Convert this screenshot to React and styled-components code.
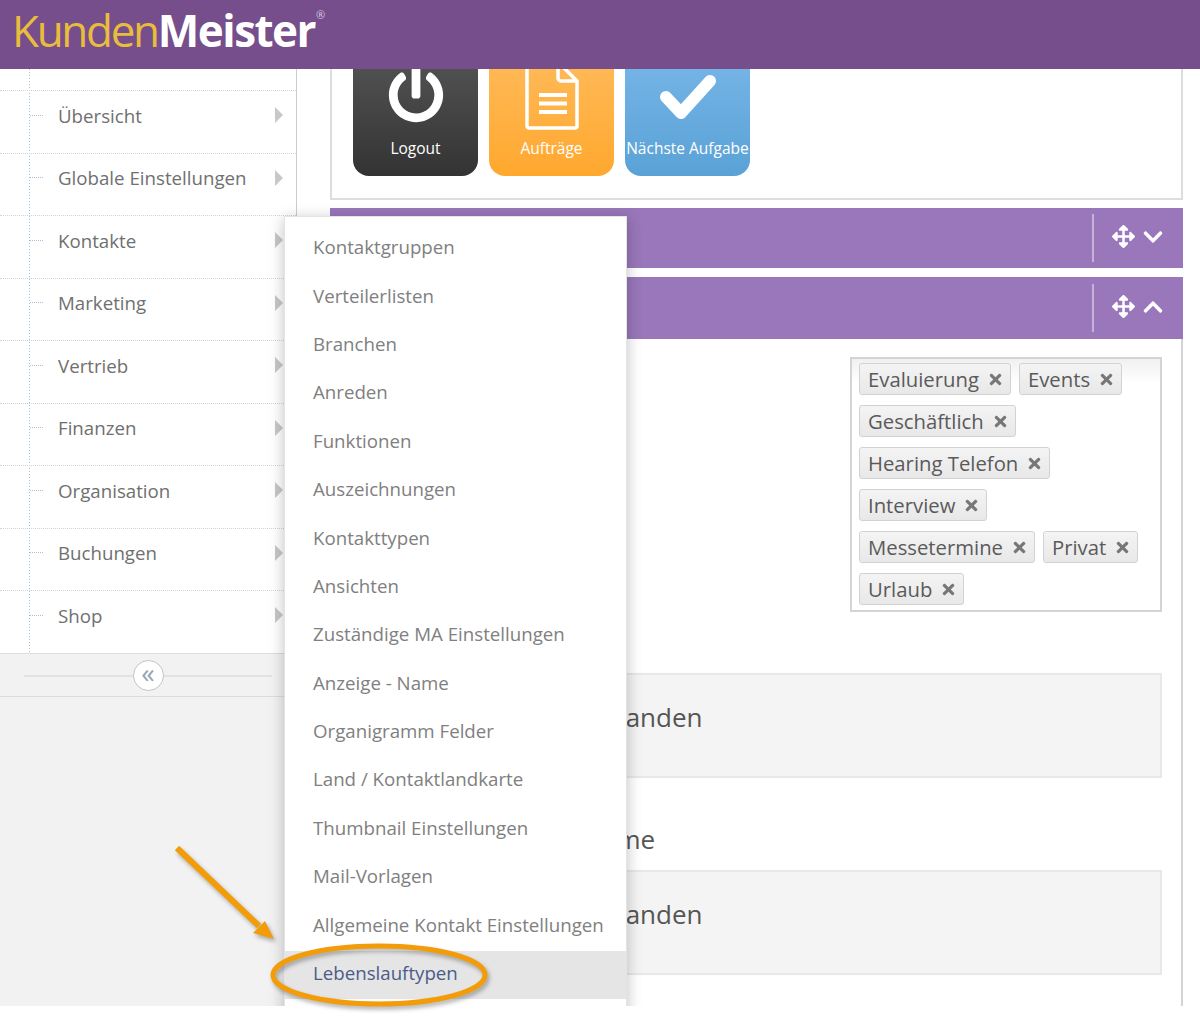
import React from "react";
import styled, { createGlobalStyle } from "styled-components";
import {
  FaArrowsAlt,
  FaChevronDown,
  FaChevronUp,
  FaPowerOff,
  FaTimes,
} from "react-icons/fa";

const navItems = [
  "Übersicht",
  "Globale Einstellungen",
  "Kontakte",
  "Marketing",
  "Vertrieb",
  "Finanzen",
  "Organisation",
  "Buchungen",
  "Shop",
];

const menuItems = [
  "Kontaktgruppen",
  "Verteilerlisten",
  "Branchen",
  "Anreden",
  "Funktionen",
  "Auszeichnungen",
  "Kontakttypen",
  "Ansichten",
  "Zuständige MA Einstellungen",
  "Anzeige - Name",
  "Organigramm Felder",
  "Land / Kontaktlandkarte",
  "Thumbnail Einstellungen",
  "Mail-Vorlagen",
  "Allgemeine Kontakt Einstellungen",
  "Lebenslauftypen",
];

const tagRows = [
  ["Evaluierung", "Events"],
  ["Geschäftlich"],
  ["Hearing Telefon"],
  ["Interview"],
  ["Messetermine", "Privat"],
  ["Urlaub"],
];

const FileGlyph = () => (
  <TileSvg $top={8} width="54" height="74" viewBox="0 0 54 74" fill="none" stroke="#fff">
    <path d="M2 5 H33 L52 24 V69 a2 2 0 0 1 -2 2 H4 a2 2 0 0 1 -2 -2 Z" strokeWidth="3.5" />
    <path d="M33 5 V21 a3 3 0 0 0 3 3 H52" strokeWidth="3.5" />
    <path d="M14 38 H42 M14 46.5 H42 M14 55 H42" strokeWidth="4" />
  </TileSvg>
);

const CheckGlyph = () => (
  <TileSvg $top={25} width="58" height="46" viewBox="0 0 58 46" fill="none" stroke="#fff">
    <path
      d="M7 23 L22 39 L51 7"
      strokeWidth="12"
      strokeLinecap="round"
      strokeLinejoin="round"
    />
  </TileSvg>
);

export default function App() {
  return (
    <Page>
      <GlobalStyle />
      <Frame>
        <Header>
          <Logo>
            <LogoLight>Kunden</LogoLight>
            <LogoBold>Meister</LogoBold>
            <LogoMark>®</LogoMark>
          </Logo>
        </Header>
        <Body>
          <Sidebar>
            <Nav>
              {navItems.map((item) => (
                <NavItem key={item}>
                  <NavTick />
                  <NavLabel>{item}</NavLabel>
                  <NavArrow />
                </NavItem>
              ))}
            </Nav>
            <Collapse>
              <CollapseLine />
              <CollapseButton>«</CollapseButton>
            </Collapse>
          </Sidebar>
          <Main>
            <Shortcuts>
              <Tile $from="#555555" $to="#333333">
                <PowerIcon />
                <TileLabel>Logout</TileLabel>
              </Tile>
              <Tile $from="#ffbb5c" $to="#ffa82e">
                <FileGlyph />
                <TileLabel>Aufträge</TileLabel>
              </Tile>
              <Tile $from="#78b6e8" $to="#5aa2d6">
                <CheckGlyph />
                <TileLabel>Nächste Aufgabe</TileLabel>
              </Tile>
            </Shortcuts>
            <PanelBar>
              <PanelTools>
                <FaArrowsAlt size={23} />
                <FaChevronDown size={22} />
              </PanelTools>
            </PanelBar>
            <PanelBar $open>
              <PanelTools>
                <FaArrowsAlt size={23} />
                <FaChevronUp size={22} />
              </PanelTools>
            </PanelBar>
            <PanelBody>
              <TagBox>
                {tagRows.map((row) => (
                  <TagRow key={row[0]}>
                    {row.map((tag) => (
                      <Tag key={tag}>
                        {tag}
                        <FaTimes size={17} />
                      </Tag>
                    ))}
                  </TagRow>
                ))}
              </TagBox>
              <Well $gap={61}>Keine Lebensläufe vorhanden</Well>
              <FieldLabel>Lebenslauf Name</FieldLabel>
              <Well $gap={14}>Keine Lebensläufe vorhanden</Well>
            </PanelBody>
          </Main>
        </Body>
        <Menu>
          {menuItems.map((item) => (
            <MenuItem key={item} $active={item === "Lebenslauftypen"}>
              {item}
            </MenuItem>
          ))}
        </Menu>
      </Frame>
      <Annotation viewBox="0 0 330 190" fill="none">
        <path d="M10 12 L92 90" stroke="#f39c0a" strokeWidth="6" />
        <path d="M107 103 L86 97 L98 85 Z" fill="#f39c0a" />
        <ellipse
          cx="212"
          cy="139"
          rx="106"
          ry="29"
          stroke="#f39c0a"
          strokeWidth="5"
        />
      </Annotation>
    </Page>
  );
}

const GlobalStyle = createGlobalStyle`
  * {
    box-sizing: border-box;
  }

  body {
    margin: 0;
    background: #ffffff;
    font-family: "Open Sans", "Liberation Sans", sans-serif;
  }
`;

const Page = styled.div`
  position: relative;
  width: 1200px;
  height: 1019px;
  overflow: hidden;
`;

const Frame = styled.div`
  position: relative;
  height: 1006px;
  overflow: hidden;
  display: flex;
  flex-direction: column;
`;

const Header = styled.header`
  position: relative;
  z-index: 2;
  flex: none;
  height: 69px;
  background: #754e8b;
  padding: 0 0 9px 12px;
  display: flex;
  align-items: center;
`;

const Logo = styled.div`
  display: flex;
  align-items: flex-start;
  font-size: 44px;
  line-height: 60px;
`;

const LogoLight = styled.span`
  color: #e8bc3d;
  font-weight: 400;
  letter-spacing: -2.3px;
`;

const LogoBold = styled.span`
  color: #ffffff;
  font-weight: 700;
  letter-spacing: -1.5px;
`;

const LogoMark = styled.span`
  color: #d8cde0;
  font-size: 11px;
  line-height: 18px;
  margin: 6px 0 0 1px;
`;

const Body = styled.div`
  flex: 1;
  min-height: 0;
  display: flex;
`;

const Sidebar = styled.aside`
  flex: none;
  width: 297px;
  background: #f2f2f2;
  border-right: 1px solid #cccccc;
`;

const Nav = styled.ul`
  list-style: none;
  margin: 0;
  padding: 21px 0 0;
  height: 584px;
  background: #ffffff;
  background-image: linear-gradient(#9cc4e8 50%, transparent 50%);
  background-size: 1px 3px;
  background-repeat: repeat-y;
  background-position: 29px 0;
`;

const NavItem = styled.li`
  height: 62.5px;
  display: flex;
  align-items: center;
  padding: 0 0 13px 30px;
  border-top: 1px dotted #d4d4d4;
`;

const NavTick = styled.span`
  flex: none;
  width: 13px;
  border-top: 1px dotted #a9c0d8;
`;

const NavLabel = styled.span`
  flex: 1;
  margin-left: 15px;
  font-size: 18.7px;
  color: #707070;
`;

const NavArrow = styled.span`
  flex: none;
  margin-right: 13px;
  border-left: 8px solid #c8c8c8;
  border-top: 8px solid transparent;
  border-bottom: 8px solid transparent;
`;

const Collapse = styled.div`
  position: relative;
  height: 44px;
  border-top: 1px solid #dddddd;
  border-bottom: 1px solid #dddddd;
  display: flex;
  align-items: center;
  justify-content: center;
`;

const CollapseLine = styled.span`
  position: absolute;
  left: 24px;
  right: 24px;
  top: 50%;
  border-top: 2px solid #e2e2e2;
`;

const CollapseButton = styled.span`
  position: relative;
  width: 31px;
  height: 31px;
  border-radius: 50%;
  border: 1px solid #c4c4c4;
  background: #ffffff;
  color: #98a4b4;
  font-size: 27px;
  line-height: 24px;
  display: flex;
  align-items: center;
  justify-content: center;
  padding-bottom: 5px;
`;

const Main = styled.main`
  flex: 1;
  min-width: 0;
  margin-top: -20px;
  padding: 0 17px 0 33px;
  display: flex;
  flex-direction: column;
`;

const Shortcuts = styled.section`
  flex: none;
  height: 151px;
  border: 2px solid #dddddd;
  border-top: none;
  padding-left: 21px;
  display: flex;
  gap: 11px;
`;

const Tile = styled.div`
  width: 125px;
  height: 127px;
  border-radius: 0 0 16px 16px;
  background: linear-gradient(${(p) => p.$from}, ${(p) => p.$to});
  color: #ffffff;
  display: flex;
  flex-direction: column;
  align-items: center;
  position: relative;
  white-space: nowrap;
`;

const PowerIcon = styled(FaPowerOff)`
  width: 56px;
  height: 60px;
  margin-top: 16px;
`;

const TileSvg = styled.svg`
  margin-top: ${(p) => p.$top}px;
`;

const TileLabel = styled.span`
  position: absolute;
  top: 88px;
  left: 0;
  right: 0;
  text-align: center;
  font-size: 15.5px;
  line-height: 22px;
`;

const PanelBar = styled.div`
  flex: none;
  height: ${(p) => (p.$open ? "62px" : "60px")};
  margin-top: ${(p) => (p.$open ? "9px" : "8px")};
  background: #9977ba;
  display: flex;
  justify-content: flex-end;
  align-items: center;
`;

const PanelTools = styled.div`
  width: 91px;
  height: 48px;
  border-left: 2px solid #c4b2d8;
  color: #ffffff;
  display: flex;
  align-items: center;
  gap: 7px;
  padding: 0 0 3px 18px;
`;

const PanelBody = styled.section`
  flex: 1;
  border-right: 2px solid #d4d4d4;
  padding: 18px 19px 0 20px;
  display: flex;
  flex-direction: column;
`;

const TagBox = styled.div`
  align-self: flex-end;
  width: 312px;
  height: 255px;
  border: 2px solid #d4d4d4;
  background: linear-gradient(#f0f0f0, #ffffff 24px);
  padding: 4px 7px;
  display: flex;
  flex-direction: column;
  gap: 10px;
`;

const TagRow = styled.div`
  display: flex;
  gap: 8px;
`;

const Tag = styled.span`
  height: 32px;
  padding: 0 6px 0 8px;
  display: flex;
  align-items: center;
  gap: 8px;
  border: 1px solid #d2d2d2;
  border-radius: 3px;
  background: linear-gradient(#f4f4f4, #e8e8e8);
  color: #5a5a5a;
  font-size: 20.3px;
  white-space: nowrap;

  svg {
    color: #777777;
  }
`;

const Well = styled.div`
  height: 105px;
  margin-top: ${(p) => p.$gap}px;
  border: 2px solid #e8e8e8;
  background: #f4f4f4;
  color: #555555;
  font-size: 26px;
  line-height: 36px;
  padding-top: 24px;
  white-space: nowrap;
  text-indent: -10px;
`;

const FieldLabel = styled.div`
  height: 34px;
  margin-top: 44px;
  padding-left: 93px;
  color: #555555;
  font-size: 26px;
  line-height: 34px;
  white-space: nowrap;
`;

const Menu = styled.ul`
  position: absolute;
  z-index: 3;
  left: 284px;
  top: 216px;
  width: 343px;
  margin: 0;
  padding: 8px 0 20px;
  list-style: none;
  background: #ffffff;
  border: 1px solid #e4e4e4;
  box-shadow: 0 3px 14px rgba(0, 0, 0, 0.25);
`;

const MenuItem = styled.li`
  height: 48.4px;
  padding: 0 0 5px 28px;
  display: flex;
  align-items: center;
  font-size: 18.7px;
  white-space: nowrap;
  color: ${(p) => (p.$active ? "#4c5c88" : "#808080")};
  background: ${(p) => (p.$active ? "#e5e5e5" : "transparent")};
`;

const Annotation = styled.svg`
  position: absolute;
  z-index: 4;
  left: 167px;
  top: 836px;
  width: 330px;
  height: 190px;
  filter: drop-shadow(2px 3px 2px rgba(0, 0, 0, 0.3));
`;
